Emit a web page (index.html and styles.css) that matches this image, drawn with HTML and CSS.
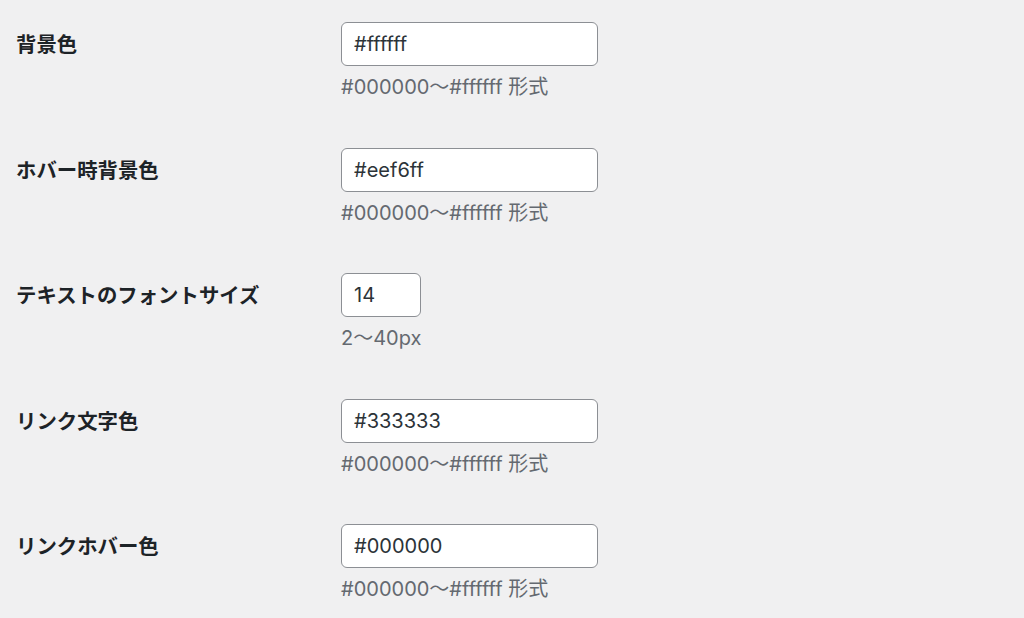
FILE: index.html
```html
<!DOCTYPE html>
<html lang="ja">
<head>
    <meta charset="UTF-8">
    <meta name="viewport" content="width=device-width, initial-scale=1.0">
    <title>設定</title>
    <link rel="stylesheet" href="styles.css">
</head>
<body>

    <div class="form-table">
        <div class="row">
            <label class="label" for="bg">背景色</label>
            <div class="field">
                <input type="text" id="bg" class="regular" value="#ffffff">
                <p class="description">#000000〜#ffffff 形式</p>
            </div>
        </div>
        <div class="row">
            <label class="label" for="hover-bg">ホバー時背景色</label>
            <div class="field">
                <input type="text" id="hover-bg" class="regular" value="#eef6ff">
                <p class="description">#000000〜#ffffff 形式</p>
            </div>
        </div>
        <div class="row">
            <label class="label" for="font-size">テキストのフォントサイズ</label>
            <div class="field">
                <input type="text" id="font-size" class="small" value="14">
                <p class="description">2〜40px</p>
            </div>
        </div>
        <div class="row">
            <label class="label" for="link-color">リンク文字色</label>
            <div class="field">
                <input type="text" id="link-color" class="regular" value="#333333">
                <p class="description">#000000〜#ffffff 形式</p>
            </div>
        </div>
        <div class="row">
            <label class="label" for="link-hover">リンクホバー色</label>
            <div class="field">
                <input type="text" id="link-hover" class="regular" value="#000000">
                <p class="description">#000000〜#ffffff 形式</p>
            </div>
        </div>
    </div>

</body>
</html>
```

FILE: styles.css
```css
body {
    margin: 0;
    background-color: #f0f0f1;
    font-family: Inter, "Noto Sans CJK JP", sans-serif;
    color: #1d2327;
}
.form-table {
    display: flex;
    flex-direction: column;
    padding: 22px 0 0 16px;
}
.row {
    display: grid;
    grid-template-columns: 325px 1fr;
    height: 125.5px;
}
.row:last-child {
    height: auto;
}
.label {
    padding-top: 7px;
    font-family: "Noto Sans CJK JP", sans-serif;
    font-size: 20.4px;
    line-height: 28px;
    font-weight: bold;
}
.field {
    display: flex;
    flex-direction: column;
    align-items: flex-start;
}
input {
    box-sizing: border-box;
    height: 44px;
    margin: 0;
    padding: 0 12px;
    border: 1px solid #8c8f94;
    border-radius: 6px;
    background: #fff;
    color: #2c3338;
    font-family: inherit;
    font-size: 20px;
}
.regular {
    width: 257px;
}
.small {
    width: 80px;
}
.description {
    margin: 8px 0 0;
    font-size: 20px;
    line-height: 26px;
    color: #646970;
}
```
